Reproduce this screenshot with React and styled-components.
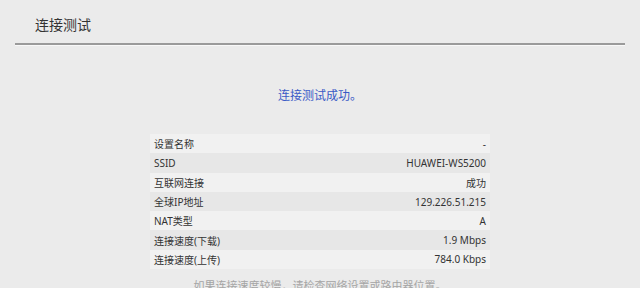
import React from 'react';
import styled, { createGlobalStyle } from 'styled-components';

const GlobalStyle = createGlobalStyle`
  html, body {
    margin: 0;
    padding: 0;
    background: #ebebeb;
    font-family: "Noto Sans", "Noto Sans CJK SC", sans-serif;
    overflow: hidden;
  }
`;

const Page = styled.div`
  width: 640px;
  height: 288px;
  background: #ebebeb;
  overflow: hidden;
`;

const Header = styled.div`
  margin: 0 15px;
  padding: 14px 0 0 20px;
  height: 29px;
  border-bottom: 2px solid #9a9a9a;
  box-shadow: 0 1px 0 #f8f8f8;
  font-size: 14px;
  color: #333;
  line-height: 22px;
`;

const Result = styled.div`
  margin-top: 42px;
  text-align: center;
  font-size: 12px;
  color: #3a5ac6;
  line-height: 18px;
`;

const Table = styled.div`
  width: 340px;
  margin: 29px auto 0;
  display: flex;
  flex-direction: column;
`;

const Row = styled.div`
  display: flex;
  justify-content: space-between;
  align-items: center;
  height: 19.3px;
  padding: 0 4px;
  font-size: 10px;
  color: #333;
  background: ${p => (p.$odd ? '#f1f1f1' : '#e7e7e7')};
`;

const Note = styled.div`
  margin-top: 9px;
  text-align: center;
  font-size: 11px;
  line-height: 16px;
  color: #a5a5a5;
`;

const rows = [
  ['设置名称', '-'],
  ['SSID', 'HUAWEI-WS5200'],
  ['互联网连接', '成功'],
  ['全球IP地址', '129.226.51.215'],
  ['NAT类型', 'A'],
  ['连接速度(下载)', '1.9 Mbps'],
  ['连接速度(上传)', '784.0 Kbps'],
];

const App = () => (
  <Page>
    <GlobalStyle />
    <Header>连接测试</Header>
    <Result>连接测试成功。</Result>
    <Table>
      {rows.map(([label, value], i) => (
        <Row key={label} $odd={i % 2 === 0}>
          <span>{label}</span>
          <span>{value}</span>
        </Row>
      ))}
    </Table>
    <Note>如果连接速度较慢，请检查网络设置或路由器位置。</Note>
  </Page>
);

export default App;
